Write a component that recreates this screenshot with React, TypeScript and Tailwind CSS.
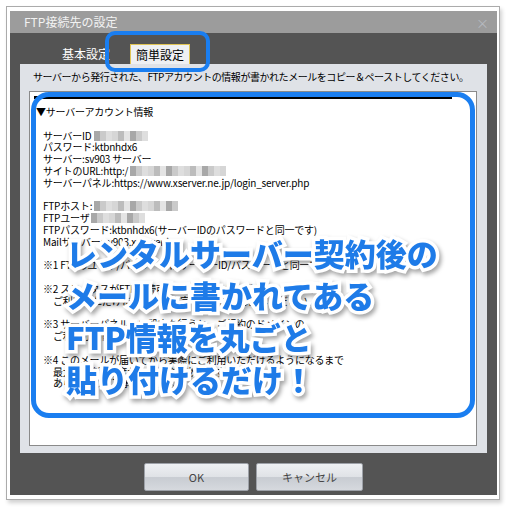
import React from "react";

const shades = [
  "bg-[#d6d6d6]",
  "bg-[#bcbcbc]",
  "bg-[#e4e4e4]",
  "bg-[#a8a8a8]",
  "bg-[#cacaca]",
  "bg-[#dedede]",
];

function Blur({ cells }: { cells: number }) {
  return (
    <span className="inline-flex h-[10px] align-[-1px]">
      {Array.from({ length: cells }).map((_, i) => (
        <span key={i} className={`w-[6px] h-full ${shades[(i * 7 + 3) % shades.length]}`} />
      ))}
    </span>
  );
}

const bigLines = ["レンタルサーバー契約後の", "メールに書かれてある", "FTP情報を丸ごと", "貼り付けるだけ！"];

export default function App() {
  return (
    <div className="relative w-[512px] h-[510px] bg-white overflow-hidden font-['Noto_Sans_CJK_JP',sans-serif]">
      {/* FRAME */}
      <div className="ml-[6px] mt-[6px] w-[494px] h-[494px] border border-[#ababab] bg-white pl-[3px] pt-[4px] shadow-[2px_3px_4px_rgba(0,0,0,0.18)]">
        {/* DIALOG */}
        <div className="w-[487px] h-[484px] bg-[#545454] flex flex-col">
          {/* TITLE */}
          <div className="h-[22px] bg-[#9c9c9c] flex items-center justify-between pl-[14px] pr-[8px]">
            <span className="text-[12px] text-[#f2f2f2] leading-none">FTP接続先の設定</span>
            <span className="text-[13px] text-[#b6bac0] leading-none">×</span>
          </div>

          {/* TABS */}
          <div className="h-[31px] flex items-end">
            <span className="ml-[52px] mb-[4px] text-[12px] text-white leading-none">基本設定</span>
            <span className="ml-[20px] w-[60px] h-[20px] bg-[#eef0f3] border-t border-x border-[#e0c455] flex items-center justify-center text-[12px] text-black leading-none">
              簡単設定
            </span>
          </div>

          {/* PANEL */}
          <div className="ml-[10px] w-[467px] h-[389px] bg-[#dfe2e7] flex flex-col pl-[9px] pr-[10px] pb-[7px]">
            <p className="h-[27px] pt-[6px] pl-[4px] text-[10px] tracking-[-0.45px] text-black leading-[14px] whitespace-nowrap">
              サーバーから発行された、FTPアカウントの情報が書かれたメールをコピー＆ペーストしてください。
            </p>
            <div className="relative flex-1 bg-white border border-[#8a8a8a] overflow-hidden">
              <div className="absolute left-[4px] top-[4px] w-[418px] h-[3px] bg-black" />
              <div className="pt-[14px] pl-[6px] text-[10px] leading-[11.8px] tracking-[-0.2px] text-black whitespace-nowrap">
                <p>▼サーバーアカウント情報</p>
                <p>&nbsp;</p>
                <div className="pl-[7px]">
                  <p>
                    サーバーID <Blur cells={9} />
                  </p>
                  <p>パスワード:ktbnhdx6</p>
                  <p>サーバー:sv903 サーバー</p>
                  <p>
                    サイトのURL:http:/ <Blur cells={16} />
                  </p>
                  <p>サーバーパネル:https://www.xserver.ne.jp/login_server.php</p>
                  <p>&nbsp;</p>
                  <p>
                    FTPホスト: <Blur cells={14} />
                  </p>
                  <p>
                    FTPユーザ <Blur cells={9} />
                  </p>
                  <p>FTPパスワード:ktbnhdx6(サーバーIDのパスワードと同一です)</p>
                  <p>Mailサーバー:sv903.xserver.jp</p>
                  <p>&nbsp;</p>
                  <p>※1 FTPのユーザ/パスワードはサーバーID/パスワードと同一です</p>
                  <p>&nbsp;</p>
                  <p>※2 ステータスがFTP接続可能となっていない場合は、</p>
                  <p className="pl-[10px]">ご利用いただけません。設定完了後に再度お試しください。</p>
                  <p>&nbsp;</p>
                  <p>※3 サーバーパネルにて設定を行うと、ご契約のドメインの</p>
                  <p className="pl-[10px]">ご利用が可能になります。</p>
                  <p>&nbsp;</p>
                  <p>※4 このメールが届いてから実際にご利用いただけるようになるまで</p>
                  <p className="pl-[10px]">最大で1時間程度かかる場合があります。</p>
                  <p className="pl-[10px]">あらかじめご了承ください。</p>
                </div>
              </div>
            </div>
          </div>

          {/* BUTTONS */}
          <div className="mt-[10px] flex justify-center gap-[7px]">
            <button className="w-[105px] h-[28px] rounded-[2px] border border-[#9da1a8] bg-[linear-gradient(to_bottom,#eef0f3_0%,#dfe2e6_50%,#c8ccd2_52%,#d6d9de_100%)] text-[11px] text-[#444]">
              OK
            </button>
            <button className="w-[107px] h-[28px] rounded-[2px] border border-[#9da1a8] bg-[linear-gradient(to_bottom,#eef0f3_0%,#dfe2e6_50%,#c8ccd2_52%,#d6d9de_100%)] text-[11px] text-[#444]">
              キャンセル
            </button>
          </div>
        </div>
      </div>

      {/* TAB HIGHLIGHT */}
      <div className="absolute left-[105px] top-[31px] w-[105px] h-[41px] rounded-[10px] border-[4px] border-[#1a7ef0]" />

      {/* CONTENT HIGHLIGHT */}
      <div className="absolute left-[31px] top-[92px] w-[444px] h-[326px] rounded-[18px] border-[5px] border-[#1a7ef0]" />

      {/* CAPTION */}
      <div className="absolute left-[66px] top-[232px] drop-shadow-[2px_3px_2px_rgba(0,0,0,0.35)]">
        {bigLines.map((line) => (
          <p
            key={line}
            className="text-[31px] leading-[42px] font-black text-[#1e7be8] whitespace-nowrap [-webkit-text-stroke:7px_white] [paint-order:stroke_fill]"
          >
            {line}
          </p>
        ))}
      </div>
    </div>
  );
}
